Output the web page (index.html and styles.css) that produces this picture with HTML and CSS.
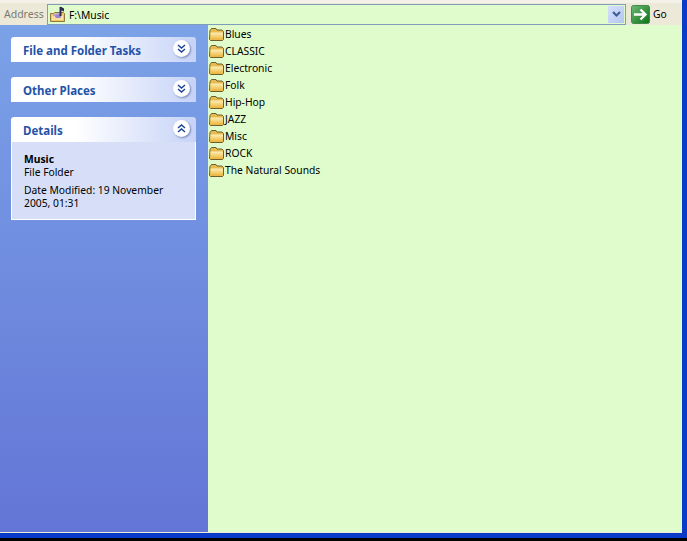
FILE: index.html
```html
<!DOCTYPE html>
<html lang="en">

<head>
  <meta charset="UTF-8">
  <title>Music</title>
  <link rel="stylesheet" href="styles.css">
</head>

<body>
  <div class="window">
    <div class="addressbar">
      <span class="addressbar__label">Address</span>
      <div class="addressbar__field">
        <svg class="icon-music" width="17" height="17" viewBox="0 0 17 17">
          <path d="M0.500 7.500h3l1-1h9l1 1v8h-14z" fill="#f3c95e" stroke="#8f7a3c"/>
          <path d="M2 9.500h11v4.500H2z" fill="#fbe4a0"/>
          <path d="M3 9.500l7-2v4" fill="none" stroke="#b7a2dd" stroke-width="2"/>
          <ellipse cx="8" cy="10.500" rx="3" ry="1.700" fill="#9b86cc"/>
          <path d="M10.500 1v9" stroke="#2d2a55" stroke-width="2"/>
          <path d="M10.500 0.500l3.500 2v3l-3.500-1.500z" fill="#2d2a55"/>
        </svg>
        <span class="addressbar__path">F:\Music</span>
        <span class="addressbar__drop">
          <svg width="9" height="7" viewBox="0 0 9 7"><path d="M1 1l3.500 3.500L8 1" fill="none" stroke="#3c5a96" stroke-width="2"/></svg>
        </span>
      </div>
      <div class="go">
        <svg width="19" height="19" viewBox="0 0 19 19">
          <defs>
            <linearGradient id="goFill" x1="0" y1="0" x2="1" y2="1">
              <stop offset="0" stop-color="#6dbb74"/>
              <stop offset="1" stop-color="#0b7016"/>
            </linearGradient>
          </defs>
          <rect x="0.500" y="0.500" width="18" height="18" rx="2" fill="url(#goFill)" stroke="#3f8a48"/>
          <path d="M3 9.500h11M9.500 4.500l5 5-5 5" fill="none" stroke="#fff" stroke-width="2.400"/>
        </svg>
        <span>Go</span>
      </div>
    </div>

    <div class="main">
      <div class="sidebar">
        <div class="task">
          <div class="task__head">
            <span>File and Folder Tasks</span>
            <span class="chevron">
              <svg width="9" height="9" viewBox="0 0 9 9"><path d="M1 1l3.500 3L8 1M1 5l3.500 3L8 5" fill="none" stroke="#1c3f94" stroke-width="1.400"/></svg>
            </span>
          </div>
        </div>
        <div class="task">
          <div class="task__head">
            <span>Other Places</span>
            <span class="chevron">
              <svg width="9" height="9" viewBox="0 0 9 9"><path d="M1 1l3.500 3L8 1M1 5l3.500 3L8 5" fill="none" stroke="#1c3f94" stroke-width="1.400"/></svg>
            </span>
          </div>
        </div>
        <div class="task">
          <div class="task__head">
            <span>Details</span>
            <span class="chevron">
              <svg width="9" height="9" viewBox="0 0 9 9"><path d="M1 4l3.500-3L8 4M1 8l3.500-3L8 8" fill="none" stroke="#1c3f94" stroke-width="1.400"/></svg>
            </span>
          </div>
          <div class="task__body">
            <b>Music</b>
            <div>File Folder</div>
            <div class="task__date">Date Modified: 19 November 2005, 01:31</div>
          </div>
        </div>
      </div>

      <ul class="files">
        <li><svg class="folder" viewBox="0 0 16 14"><use href="#folder"/></svg>Blues</li>
        <li><svg class="folder" viewBox="0 0 16 14"><use href="#folder"/></svg>CLASSIC</li>
        <li><svg class="folder" viewBox="0 0 16 14"><use href="#folder"/></svg>Electronic</li>
        <li><svg class="folder" viewBox="0 0 16 14"><use href="#folder"/></svg>Folk</li>
        <li><svg class="folder" viewBox="0 0 16 14"><use href="#folder"/></svg>Hip-Hop</li>
        <li><svg class="folder" viewBox="0 0 16 14"><use href="#folder"/></svg>JAZZ</li>
        <li><svg class="folder" viewBox="0 0 16 14"><use href="#folder"/></svg>Misc</li>
        <li><svg class="folder" viewBox="0 0 16 14"><use href="#folder"/></svg>ROCK</li>
        <li><svg class="folder" viewBox="0 0 16 14"><use href="#folder"/></svg>The Natural Sounds</li>
      </ul>
    </div>
  </div>

  <svg class="defs" width="0" height="0">
    <defs>
      <linearGradient id="folderFill" x1="0" y1="0" x2="0" y2="1">
        <stop offset="0" stop-color="#fdf0b8"/>
        <stop offset="1" stop-color="#eeb63f"/>
      </linearGradient>
      <g id="folder">
        <path d="M1 3.500L2.500 1.500h4.500l1 1.500h5l1.500 1.500v8l-1 1h-12l-1-1z" fill="#e7bb4f" stroke="#6f5f2a"/>
        <path d="M1.500 5.500h12.500v7h-12.500z" fill="url(#folderFill)"/>
      </g>
    </defs>
  </svg>
</body>

</html>
```

FILE: styles.css
```css
html {
  box-sizing: border-box;
}

*,
*::before,
*::after {
  box-sizing: inherit;
}

body {
  margin: 0;
  height: 541px;
  overflow: hidden;
  background-color: #000;
  font-family: "Noto Sans", "DejaVu Sans", sans-serif;
  font-size: 10.3px;
  color: #000;
}

.defs {
  display: block;
}

.window {
  display: flex;
  flex-direction: column;
  width: 687px;
  height: 538px;
  border-right: 5px solid #0a3bc8;
  border-bottom: 5px solid #0a3bc8;
  box-shadow: 1px 0 0 #000;
}

/* address bar */

.addressbar {
  display: flex;
  align-items: center;
  height: 25px;
  flex: none;
  background-color: #ece9d8;
  border-top: 3px solid #f4f2e8;
}

.addressbar__label {
  flex: none;
  width: 47px;
  padding-left: 4px;
  color: #7b7a70;
  font-size: 10.500px;
  white-space: nowrap;
}

.addressbar__field {
  display: flex;
  align-items: center;
  flex: none;
  width: 579px;
  height: 21px;
  padding: 0 1px 0 2px;
  background-color: #e0fccc;
  border: 1px solid #7f9db9;
}

.icon-music {
  flex: none;
  margin-right: 2px;
}

.addressbar__path {
  flex: 1;
  padding-top: 1px;
}

.addressbar__drop {
  display: flex;
  align-items: center;
  justify-content: center;
  width: 16px;
  height: 17px;
  background-image: linear-gradient(135deg, #d6e0fb, #b3c6f0);
}

.go {
  display: flex;
  align-items: center;
  gap: 3px;
  margin-left: 5px;
}

/* left task pane */

.main {
  display: flex;
  flex: 1;
  min-height: 0;
  border-bottom: 1px solid #ece9d8;
}

.sidebar {
  flex: none;
  width: 208px;
  padding: 12px 12px 0 11px;
  background-image: linear-gradient(to bottom, #7ba2e7, #6375d6);
}

.task {
  margin-bottom: 15px;
}

.task__head {
  display: flex;
  align-items: center;
  justify-content: space-between;
  height: 25px;
  padding: 2px 6px 0 12px;
  border-radius: 3px 3px 0 0;
  background-image: linear-gradient(to right, #fff 35%, #c6d3f7);
  color: #2453a8;
  font-weight: 700;
  font-size: 11.500px;
}

.chevron {
  display: flex;
  align-items: center;
  justify-content: center;
  width: 17px;
  height: 17px;
  margin-top: -4px;
  border-radius: 50%;
  background-color: #fff;
  box-shadow: 1px 1px 2px rgba(60, 80, 140, 0.6);
}

.task__body {
  height: 78px;
  padding: 11px 12px 0;
  background-color: #d6dff7;
  border: 1px solid #fff;
  border-top: 0;
  line-height: 13px;
}

.task__date {
  margin-top: 5px;
}

/* file list */

.files {
  flex: 1;
  margin: 0;
  padding: 0 0 0 1px;
  list-style: none;
  background-color: #e0fccc;
}

.files li {
  display: flex;
  align-items: center;
  height: 17px;
}

.folder {
  width: 16px;
  height: 14px;
  flex: none;
}
```
